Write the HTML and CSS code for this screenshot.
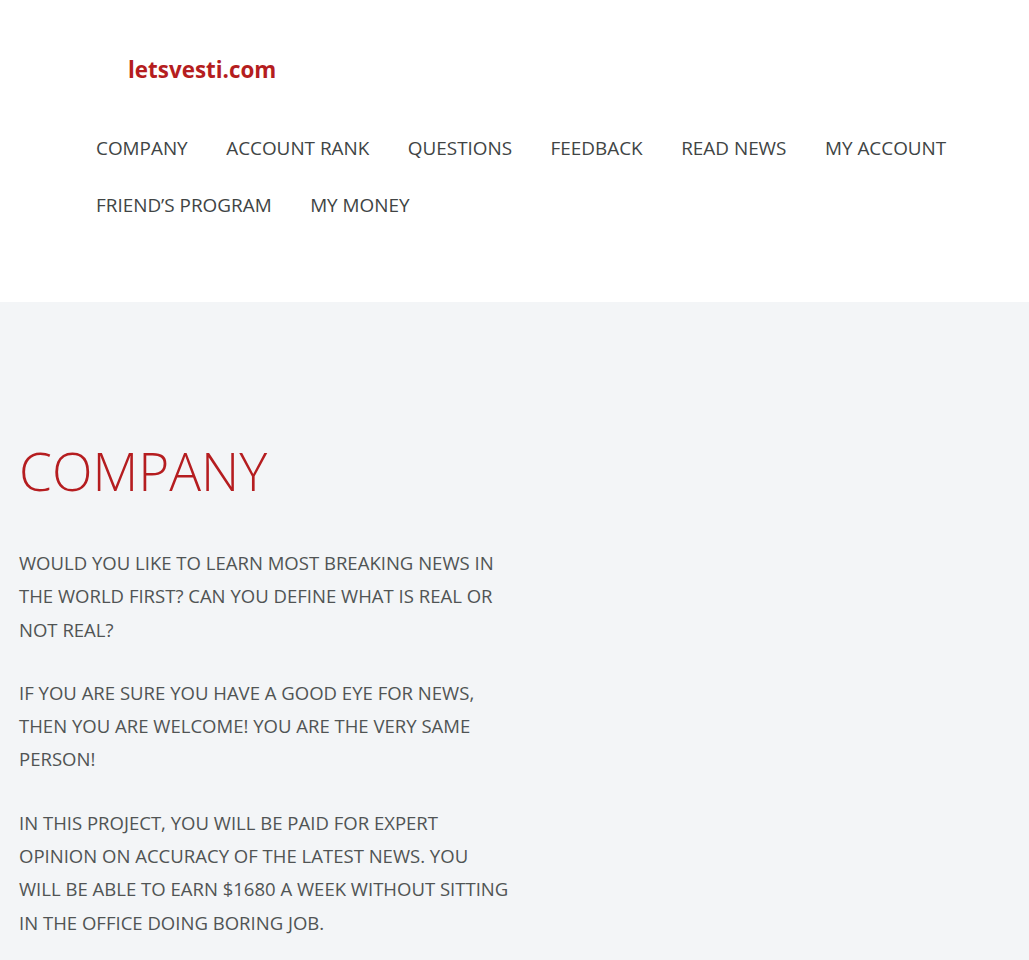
FILE: index.html
```html
<!DOCTYPE html>
<html>
<head>
<meta charset="utf-8">
<link rel="stylesheet" href="styles.css">
</head>
<body>
<header class="header">
  <div class="logo">letsvesti.com</div>
  <nav class="nav">
    <a class="nav-item">Company</a>
    <a class="nav-item">Account rank</a>
    <a class="nav-item">Questions</a>
    <a class="nav-item">Feedback</a>
    <a class="nav-item">Read news</a>
    <a class="nav-item">My account</a>
    <a class="nav-item">Friend’s program</a>
    <a class="nav-item">My money</a>
  </nav>
</header>
<main class="main">
  <h1 class="title">COMPANY</h1>
  <div class="content">
    <p>WOULD YOU LIKE TO LEARN MOST BREAKING NEWS IN THE WORLD FIRST? CAN YOU DEFINE WHAT IS REAL OR NOT REAL?</p>
    <p>IF YOU ARE SURE YOU HAVE A GOOD EYE FOR NEWS, THEN YOU ARE WELCOME! YOU ARE THE VERY SAME PERSON!</p>
    <p>IN THIS PROJECT, YOU WILL BE PAID FOR EXPERT OPINION ON ACCURACY OF THE LATEST NEWS. YOU WILL&nbsp;BE ABLE TO EARN $1680 A WEEK WITHOUT SITTING IN THE OFFICE DOING BORING JOB.</p>
  </div>
</main>
</body>
</html>
```
FILE: styles.css
```css
* { box-sizing: border-box; }
html, body { margin: 0; padding: 0; }
body {
  font-family: "Open Sans", "Liberation Sans", sans-serif;
  background: #f3f5f7;
  color: #444;
}
.header {
  background: #fff;
  height: 302px;
  padding: 56px 60px 0 96px;
}
.logo {
  font-size: 22.4px;
  font-weight: 700;
  color: #b51d20;
  margin-left: 32px;
  line-height: 28px;
}
.nav {
  display: flex;
  flex-wrap: wrap;
  column-gap: 38.5px;
  margin-top: 36px;
}
.nav-item {
  text-transform: uppercase;
  font-size: 18.9px;
  line-height: 57px;
  color: #404444;
}
.main {
  padding: 134px 19px 40px 19px;
}
.title {
  margin: 0;
  font-weight: 300;
  font-size: 53px;
  line-height: 70px;
  color: #b51d20;
}
.content {
  width: 500px;
  margin-top: 40px;
}
.content p {
  margin: 0 0 30px 0;
  font-size: 18.55px;
  line-height: 33.3px;
  color: #505454;
}
```
